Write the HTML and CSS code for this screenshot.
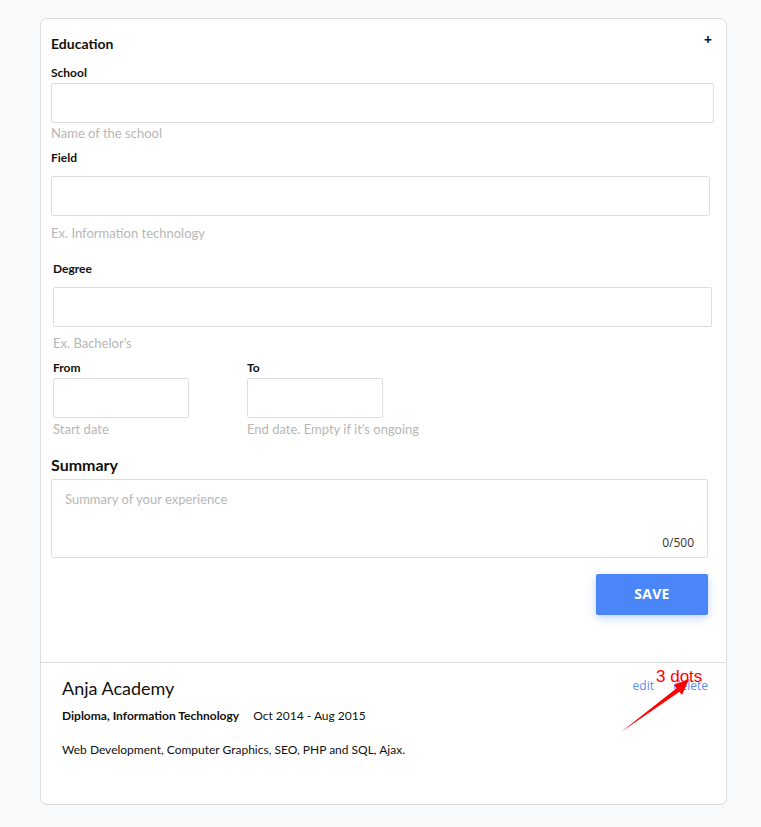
FILE: index.html
```html
<!DOCTYPE html>
<html lang="en">
<head>
    <meta charset="UTF-8">
    <meta name="viewport" content="width=device-width, initial-scale=1.0">
    <title>Education</title>
    <link rel="stylesheet" href="styles.css">
</head>
<body>
    <div class="card">
        <div class="form">
            <div class="head">
                <div class="title">Education</div>
                <div class="add">+</div>
            </div>

            <div class="label school-label">School</div>
            <input class="field school-input" type="text">
            <div class="hint">Name of the school</div>

            <div class="label field-label">Field</div>
            <input class="field field-input" type="text">
            <div class="hint field-hint">Ex. Information technology</div>

            <div class="shift">
                <div class="label degree-label">Degree</div>
                <input class="field degree-input" type="text">
                <div class="hint degree-hint">Ex. Bachelor’s</div>

                <div class="dates">
                    <div class="date from">
                        <div class="label date-label">From</div>
                        <input class="field date-input" type="text">
                        <div class="hint date-hint">Start date</div>
                    </div>
                    <div class="date">
                        <div class="label date-label">To</div>
                        <input class="field date-input" type="text">
                        <div class="hint date-hint">End date. Empty if it’s ongoing</div>
                    </div>
                </div>
            </div>

            <div class="summary-label">Summary</div>
            <div class="summary">
                <textarea placeholder="Summary of your experience"></textarea>
                <span class="count">0/500</span>
            </div>

            <div class="actions">
                <button class="save">SAVE</button>
            </div>
        </div>

        <div class="entry">
            <div class="entry-head">
                <div class="school-name">Anja Academy</div>
                <div class="links">
                    <a href="#">edit</a>
                    <a href="#">delete</a>
                </div>
            </div>
            <div class="meta">
                <b>Diploma, Information Technology</b>
                <span>Oct 2014 - Aug 2015</span>
            </div>
            <div class="desc">Web Development, Computer Graphics, SEO, PHP and SQL, Ajax.</div>
        </div>
    </div>

    <div class="note">
        <span class="note-text">3 dots</span>
        <svg class="arrow" width="761" height="827" viewBox="0 0 761 827">
            <polygon points="621,732 679.5,691.8 682,695 689,679 674,685 676.6,688.2" fill="#ff0000"/>
        </svg>
    </div>
</body>
</html>
```

FILE: styles.css
```css
body{
    margin: 0;
    background: #f8f9fb;
    font-family: Lato, "Open Sans", sans-serif;
    color: #111;
}
.card{
    margin: 18px 0 22px 40px;
    width: 685px;
    background: #fff;
    border: 1px solid #dcdcdc;
    border-radius: 7px;
}
.form{
    padding: 16px 12px 47px 10px;
}
.head{
    display: flex;
    justify-content: space-between;
    align-items: center;
}
.title{
    font-size: 14px;
    font-weight: bold;
    line-height: 18px;
}
.add{
    font-family: "Open Sans", sans-serif;
    font-size: 14px;
    font-weight: bold;
    line-height: 10px;
    margin: -8px 2px 0 0;
}
.label{
    font-size: 12px;
    font-weight: bold;
    line-height: 16px;
}
.school-label{ margin-top: 12px; }
.field-label{ margin-top: 9px; }
.degree-label{ margin-top: 20px; }
.date-label{ margin-top: 9px; }

.field{
    display: block;
    box-sizing: border-box;
    height: 40px;
    border: 1px solid #dedede;
    border-radius: 2px;
    background: #fff;
    outline: none;
}
.school-input{ width: 663px; margin-top: 2px; }
.field-input{ width: 659px; margin-top: 10px; }
.degree-input{ width: 659px; margin-top: 10px; }
.date-input{ width: 136px; margin-top: 2px; }

.hint{
    font-size: 13px;
    line-height: 16px;
    color: #b7b7b7;
    margin-top: 2px;
}
.field-hint{ margin-top: 9px; }
.degree-hint{ margin-top: 8px; }
.date-hint{ margin-top: 3px; white-space: nowrap; }

.shift{
    margin-left: 2px;
}
.dates{
    display: flex;
}
.date.from{
    width: 194px;
}

.summary-label{
    margin-top: 18px;
    font-size: 16px;
    font-weight: bold;
    line-height: 20px;
}
.summary{
    position: relative;
    width: 657px;
    margin-top: 4px;
}
.summary textarea{
    display: block;
    box-sizing: border-box;
    width: 657px;
    height: 79px;
    padding: 11px 13px;
    border: 1px solid #dedede;
    border-radius: 2px;
    font-family: Lato, sans-serif;
    font-size: 13px;
    line-height: 16px;
    resize: none;
    outline: none;
}
.summary textarea::placeholder{
    color: #b7b7b7;
}
.count{
    position: absolute;
    right: 14px;
    bottom: 7px;
    font-family: "Open Sans", sans-serif;
    font-size: 12px;
    color: #333;
}
.actions{
    width: 657px;
    display: flex;
    justify-content: flex-end;
    margin-top: 16px;
}
.save{
    width: 112px;
    height: 41px;
    padding: 0 0 2px;
    border: none;
    border-radius: 2px;
    background: #4a86f7;
    color: #fff;
    font-family: "Open Sans", sans-serif;
    font-size: 14px;
    font-weight: bold;
    letter-spacing: 0.3px;
    box-shadow: 0 3px 9px rgba(74, 134, 247, 0.35);
}

.entry{
    border-top: 1px solid #dcdcdc;
    padding: 14px 18px 46px 21px;
}
.entry-head{
    display: flex;
    justify-content: space-between;
    align-items: center;
}
.school-name{
    font-size: 18px;
    line-height: 22px;
}
.links{
    margin-top: -6px;
    font-family: "Open Sans", sans-serif;
    font-size: 12px;
}
.links a{
    color: #5b8ef0;
    text-decoration: none;
    margin-left: 16px;
}
.meta{
    margin-top: 9px;
    font-size: 12px;
    line-height: 16px;
}
.meta span{
    margin-left: 11px;
}
.desc{
    margin-top: 18px;
    font-size: 12px;
    line-height: 16px;
}

.note{
    position: absolute;
    left: 0;
    top: 0;
    width: 761px;
    height: 827px;
    pointer-events: none;
}
.note-text{
    position: absolute;
    left: 656px;
    top: 667px;
    font-family: "Liberation Sans", Arial, sans-serif;
    font-size: 17px;
    color: #ff0000;
}
.arrow{
    position: absolute;
    left: 0;
    top: 0;
}
```
